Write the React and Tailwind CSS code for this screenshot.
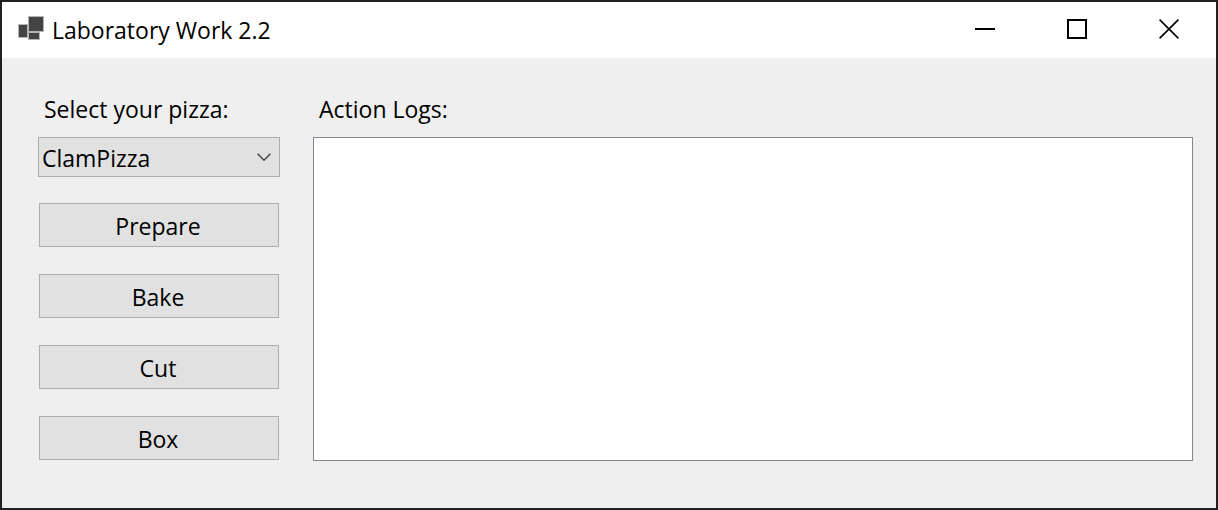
import { useState } from "react";

const PIZZAS = ["ClamPizza", "CheesePizza", "VeggiePizza", "PepperoniPizza"];
const ACTIONS = ["Prepare", "Bake", "Cut", "Box"];

function AppIcon() {
  return (
    <svg width="26" height="26" viewBox="0 0 26 26" aria-hidden="true">
      <g fill="#444444" stroke="#b4b4b4" strokeWidth="2" paintOrder="stroke">
        <rect x="11" y="1" width="14" height="14" />
        <rect x="1" y="9" width="8" height="12" />
        <rect x="11" y="17" width="10" height="6" />
      </g>
    </svg>
  );
}

function CaptionButton({ label, children }) {
  return (
    <button
      type="button"
      aria-label={label}
      className="flex w-[92px] items-center justify-center self-stretch hover:bg-[#e5e5e5]"
    >
      <svg width="20" height="20" viewBox="0 0 20 20" fill="none" stroke="#000000" strokeWidth="2" aria-hidden="true">
        {children}
      </svg>
    </button>
  );
}

function TitleBar() {
  return (
    <header className="flex h-14 items-center bg-white pb-0.5 pl-4">
      <AppIcon />
      <h1 className="ml-2 flex-1 pt-0.5">Laboratory Work 2.2</h1>
      <div className="flex self-stretch pr-px">
        <CaptionButton label="Minimize">
          <path d="M0 10h20" />
        </CaptionButton>
        <CaptionButton label="Maximize">
          <rect x="1" y="1" width="18" height="18" />
        </CaptionButton>
        <CaptionButton label="Close">
          <path d="M0.6 0.6l18.8 18.8M19.4 0.6L0.6 19.4" strokeWidth="1.6" />
        </CaptionButton>
      </div>
    </header>
  );
}

export default function App() {
  const [pizza, setPizza] = useState(PIZZAS[0]);
  const [logs, setLogs] = useState([]);

  return (
    <div className="flex min-h-screen flex-col border-2 border-[#202020] bg-[#efefef] font-['Open_Sans','Noto_Sans',sans-serif] text-[23px] leading-8 text-black">
      <TitleBar />
      <main className="flex flex-1 gap-[33px] pt-[35px] pr-[23px] pb-[47px] pl-9">
        <section className="flex w-[242px] flex-col">
          <label htmlFor="pizza" className="mb-3 pl-1.5">
            Select your pizza:
          </label>
          <div className="grid items-center">
            <select
              id="pizza"
              value={pizza}
              onChange={(e) => setPizza(e.target.value)}
              className="col-start-1 row-start-1 h-10 appearance-none border border-[#adadad] bg-[#e1e1e1] pt-0.5 pl-[3px]"
            >
              {PIZZAS.map((name) => (
                <option key={name}>{name}</option>
              ))}
            </select>
            <svg
              width="14"
              height="8"
              viewBox="0 0 14 8"
              fill="none"
              stroke="#404040"
              strokeWidth="1.4"
              aria-hidden="true"
              className="pointer-events-none col-start-1 row-start-1 mr-[9px] justify-self-end"
            >
              <path d="M0.6 0.8L7 7.2l6.4-6.4" />
            </svg>
          </div>
          <div className="mx-px mt-[26px] flex flex-col gap-[27px]">
            {ACTIONS.map((action) => (
              <button
                key={action}
                type="button"
                onClick={() => setLogs([...logs, `${action}: ${pizza}`])}
                className="h-11 border border-[#adadad] bg-[#e1e1e1] pt-0.5 pr-0.5"
              >
                {action}
              </button>
            ))}
          </div>
        </section>
        <section className="flex flex-1 flex-col">
          <label htmlFor="logs" className="mb-3 pl-1.5">
            Action Logs:
          </label>
          <textarea
            id="logs"
            readOnly
            value={logs.join("\n")}
            className="flex-1 resize-none border border-[#828790] bg-white px-1"
          />
        </section>
      </main>
    </div>
  );
}
